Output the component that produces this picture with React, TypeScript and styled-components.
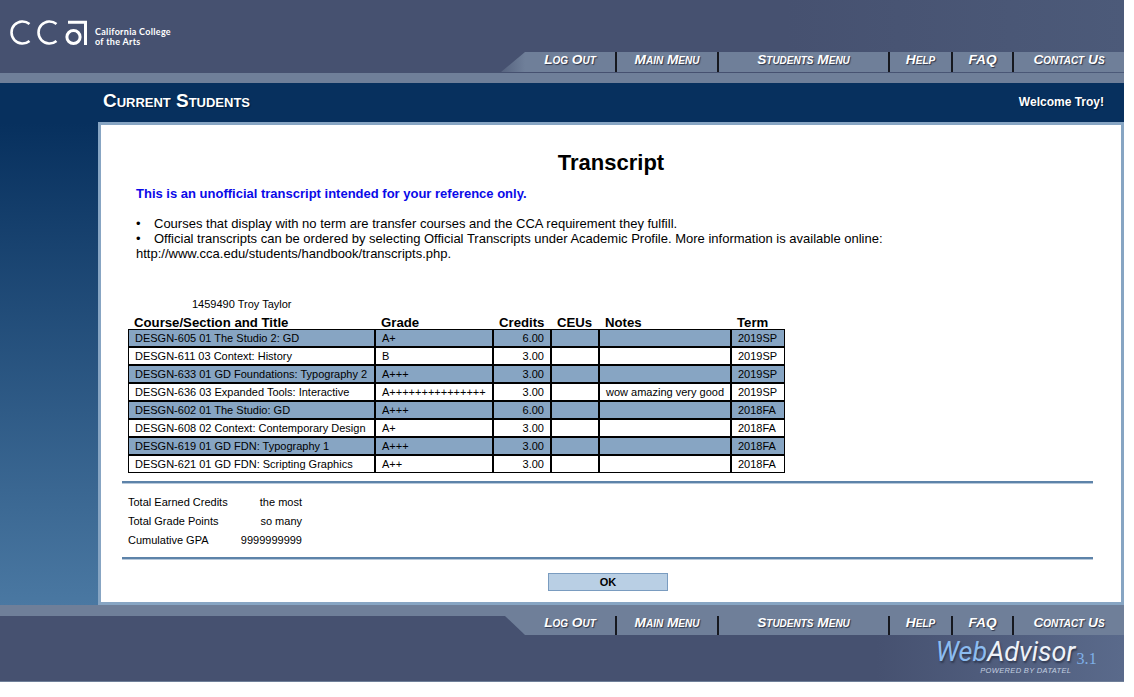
import React from "react";
import styled, { createGlobalStyle } from "styled-components";

const Global = createGlobalStyle`
  html, body { margin: 0; padding: 0; background: #fff; }
  body { font-family: "Liberation Sans", Arial, sans-serif; color: #000; }
`;

const Page = styled.div`
  width: 1124px;
  height: 682px;
  display: flex;
  flex-direction: column;
`;

const Header = styled.header`
  height: 73px;
  flex: none;
  display: flex;
  flex-direction: column;
  justify-content: space-between;
  background: linear-gradient(90deg, #465170 0%, #465170 70%, #4c5a79 100%);
`;

const LogoRow = styled.div`
  display: flex;
  align-items: flex-start;
  padding: 19px 0 0 8px;
`;

const LogoMark = styled.svg`
  width: 82px;
  height: 28px;
  flex: none;
`;

const LogoText = styled.div`
  margin: 8px 0 0 5px;
  color: #fff;
  font-family: Lato, sans-serif;
  font-weight: 700;
  font-size: 9px;
  line-height: 9.5px;
  letter-spacing: 0.3px;
  white-space: nowrap;
`;

const Bar = styled.nav<{ $foot?: boolean }>`
  display: flex;
  flex: none;
  height: ${(p) => (p.$foot ? 19 : 20)}px;
  margin: ${(p) => (p.$foot ? "0 0 0 505px" : "0 0 1px 501px")};
  padding-left: ${(p) => (p.$foot ? 20 : 24)}px;
  background: ${(p) =>
    p.$foot ? "#6f7f99" : "linear-gradient(90deg, #56637f 0, #6f7f99 24px)"};
  clip-path: ${(p) =>
    p.$foot
      ? "polygon(0 0, 100% 0, 100% 100%, 20px 100%)"
      : "polygon(24px 0, 100% 0, 100% 100%, 0 100%)"};
`;

const Tab = styled.a<{ $w?: number; $foot?: boolean }>`
  box-sizing: border-box;
  flex: ${(p) => (p.$w ? `0 0 ${p.$w}px` : "1 1 auto")};
  border-right: ${(p) => (p.$w ? "2px solid #16181f" : "none")};
  padding-bottom: ${(p) => (p.$foot ? 6 : 4)}px;
  display: flex;
  align-items: center;
  justify-content: center;
  color: #fff;
  font-weight: 700;
  font-style: italic;
  font-variant: small-caps;
  font-size: 13.7px;
  line-height: 16px;
  white-space: nowrap;
  text-shadow: 1px 1px 1px #2c3448;
`;

const Strip = styled.div<{ $h: number }>`
  height: ${(p) => p.$h}px;
  flex: none;
  background: #6f7f99;
`;

const Main = styled.main`
  height: 522px;
  flex: none;
  display: flex;
  flex-direction: column;
  background: linear-gradient(180deg, #07305e 0, #07305e 40px, #4a78a2 100%);
`;

const TitleBar = styled.div`
  height: 39px;
  flex: none;
  display: flex;
  align-items: center;
  justify-content: space-between;
  padding: 0 20px 2px 103px;
  box-sizing: border-box;
  color: #fff;
`;

const Section = styled.div`
  margin-bottom: 2px;
  font-weight: 700;
  font-variant: small-caps;
  font-size: 18.9px;
  text-shadow: 1px 1px 1px #001a3a;
`;

const Welcome = styled.div`
  font-weight: 700;
  font-size: 12px;
  text-shadow: 1px 1px 1px #001a3a;
`;

const Panel = styled.section`
  flex: 1;
  margin-left: 98px;
  border: 3px solid #87a5c3;
  background: #fff;
  display: flex;
  flex-direction: column;
`;

const Title = styled.h1`
  margin: 25px 0 0;
  text-align: center;
  font-size: 22px;
  line-height: 26px;
  font-weight: 700;
`;

const Unofficial = styled.p`
  margin: 10px 0 0 35px;
  color: #0a0ae8;
  font-size: 13px;
  line-height: 15px;
  font-weight: 700;
`;

const Notes = styled.p`
  margin: 15px 0 0 35px;
  width: 770px;
  font-size: 13px;
  line-height: 15px;
`;

const Bullet = styled.span`
  display: inline-block;
  width: 18px;
`;

const Person = styled.div`
  margin: 37px 0 0 91px;
  font-size: 11px;
  line-height: 13px;
`;

const Table = styled.table`
  margin: 3px 0 0 27px;
  border-collapse: separate;
  border-spacing: 0;
  table-layout: fixed;
  width: 657px;
  font-size: 11px;
`;

const Head = styled.th`
  box-sizing: border-box;
  padding: 1px 0 0 6px;
  height: 15px;
  text-align: left;
  font-size: 13.2px;
  line-height: 13px;
  font-weight: 700;
  white-space: nowrap;
`;

const Row = styled.tr<{ $shaded: boolean }>`
  background: ${(p) => (p.$shaded ? "#87a5c3" : "#fff")};
`;

const Cell = styled.td<{ $right?: boolean }>`
  box-sizing: border-box;
  height: 18px;
  padding: 0 6px;
  border: 1px solid #000;
  line-height: 13px;
  white-space: nowrap;
  overflow: hidden;
  text-align: ${(p) => (p.$right ? "right" : "left")};
`;

const Rule = styled.hr<{ $top: number }>`
  margin: ${(p) => p.$top}px 28px 0 21px;
  height: 1px;
  border: 0;
  border-top: 2px solid #5d83a9;
  background: #b8c9db;
`;

const Totals = styled.dl`
  margin: 8px 0 0 27px;
  width: 174px;
  display: grid;
  grid-template-columns: 1fr auto;
  grid-auto-rows: 19px;
  align-items: center;
  font-size: 11px;
`;

const Label = styled.dt`
  margin: 0;
`;

const Value = styled.dd`
  margin: 0;
  text-align: right;
`;

const Actions = styled.div`
  margin-top: 13px;
  padding-left: 447px;
`;

const Ok = styled.button`
  box-sizing: border-box;
  display: block;
  width: 120px;
  height: 18px;
  padding: 0;
  background: #b9cfe4;
  border: 1px solid #7a9cc0;
  font-family: inherit;
  font-size: 11px;
  font-weight: 700;
  color: #000;
`;

const Footer = styled.footer`
  flex: 1;
  display: flex;
  flex-direction: column;
  background: linear-gradient(90deg, #465170 0%, #465170 78%, #5a6a8b 100%);
  border-bottom: 1px solid #6f7f99;
`;

const Brand = styled.div`
  display: flex;
  justify-content: flex-end;
  align-items: flex-end;
  padding: 4px 27px 0 0;
`;

const Wordmark = styled.div`
  display: flex;
  flex-direction: column;
  align-items: flex-end;
`;

const Web = styled.div`
  font-family: Roboto, sans-serif;
  font-weight: 400;
  font-style: italic;
  font-size: 27px;
  line-height: 27px;
  color: #eef2f8;
  text-shadow: 1px 2px 2px #2f3850;
  white-space: nowrap;
`;

const WebBlue = styled.span`
  color: #8cbcf0;
`;

const Powered = styled.div`
  margin: 0 4px 0 0;
  font-style: italic;
  font-size: 7.5px;
  line-height: 9px;
  letter-spacing: 0.35px;
  color: #c3cfe0;
  white-space: nowrap;
`;

const Version = styled.div`
  font-family: "Liberation Serif", serif;
  font-size: 16px;
  line-height: 16px;
  letter-spacing: 0.2px;
  color: #7fb0e8;
  margin: 0 0 8px 1px;
`;

const tabs: [string, number | undefined][] = [
  ["Log Out", 92],
  ["Main Menu", 102],
  ["Students Menu", 171],
  ["Help", 63],
  ["FAQ", 61],
  ["Contact Us", undefined],
];

const courses = [
  ["DESGN-605 01 The Studio 2: GD", "A+", "6.00", "", "2019SP"],
  ["DESGN-611 03 Context: History", "B", "3.00", "", "2019SP"],
  ["DESGN-633 01 GD Foundations: Typography 2", "A+++", "3.00", "", "2019SP"],
  ["DESGN-636 03 Expanded Tools: Interactive", "A+++++++++++++++", "3.00", "wow amazing very good", "2019SP"],
  ["DESGN-602 01 The Studio: GD", "A+++", "6.00", "", "2018FA"],
  ["DESGN-608 02 Context: Contemporary Design", "A+", "3.00", "", "2018FA"],
  ["DESGN-619 01 GD FDN: Typography 1", "A+++", "3.00", "", "2018FA"],
  ["DESGN-621 01 GD FDN: Scripting Graphics", "A++", "3.00", "", "2018FA"],
];

const TabList = ({ foot }: { foot?: boolean }) => (
  <>
    {tabs.map(([label, w]) => (
      <Tab key={label} $w={w} $foot={foot}>
        {label}
      </Tab>
    ))}
  </>
);

export default function App() {
  return (
    <Page>
      <Global />
      <Header>
        <LogoRow>
          <LogoMark viewBox="8 19 82 28" fill="none" stroke="#fff">
            <path d="M29.5 24A11 11 0 1 0 29.5 41" strokeWidth="2.6" />
            <path d="M56.5 24A11 11 0 1 0 56.5 41" strokeWidth="2.6" />
            <circle cx="73.5" cy="37" r="6.6" strokeWidth="3" />
            <path d="M68 22.2H85.5V45" strokeWidth="3" />
          </LogoMark>
          <LogoText>
            California College
            <br />
            of the Arts
          </LogoText>
        </LogoRow>
        <Bar>
          <TabList />
        </Bar>
      </Header>
      <Strip $h={10} />
      <Main>
        <TitleBar>
          <Section>Current Students</Section>
          <Welcome>Welcome Troy!</Welcome>
        </TitleBar>
        <Panel>
          <Title>Transcript</Title>
          <Unofficial>This is an unofficial transcript intended for your reference only.</Unofficial>
          <Notes>
            <Bullet>•</Bullet>Courses that display with no term are transfer courses and the CCA requirement they fulfill.
            <br />
            <Bullet>•</Bullet>Official transcripts can be ordered by selecting Official Transcripts under Academic Profile. More information is available online:
            <br />
            http://www.cca.edu/students/handbook/transcripts.php.
          </Notes>
          <Person>1459490 Troy Taylor</Person>
          <Table>
            <colgroup>
              <col width="247" />
              <col width="118" />
              <col width="58" />
              <col width="48" />
              <col width="132" />
              <col width="54" />
            </colgroup>
            <thead>
              <tr>
                <Head>Course/Section and Title</Head>
                <Head>Grade</Head>
                <Head>Credits</Head>
                <Head>CEUs</Head>
                <Head>Notes</Head>
                <Head>Term</Head>
              </tr>
            </thead>
            <tbody>
              {courses.map((c, i) => (
                <Row key={c[0]} $shaded={i % 2 === 0}>
                  <Cell>{c[0]}</Cell>
                  <Cell>{c[1]}</Cell>
                  <Cell $right>{c[2]}</Cell>
                  <Cell />
                  <Cell>{c[3]}</Cell>
                  <Cell>{c[4]}</Cell>
                </Row>
              ))}
            </tbody>
          </Table>
          <Rule $top={8} />
          <Totals>
            <Label>Total Earned Credits</Label>
            <Value>the most</Value>
            <Label>Total Grade Points</Label>
            <Value>so many</Value>
            <Label>Cumulative GPA</Label>
            <Value>9999999999</Value>
          </Totals>
          <Rule $top={8} />
          <Actions>
            <Ok>OK</Ok>
          </Actions>
        </Panel>
      </Main>
      <Footer>
        <Strip $h={11} />
        <Bar $foot>
          <TabList foot />
        </Bar>
        <Brand>
          <Wordmark>
            <Web>
              <WebBlue>Web</WebBlue>Advisor
            </Web>
            <Powered>POWERED BY DATATEL</Powered>
          </Wordmark>
          <Version>3.1</Version>
        </Brand>
      </Footer>
    </Page>
  );
}
